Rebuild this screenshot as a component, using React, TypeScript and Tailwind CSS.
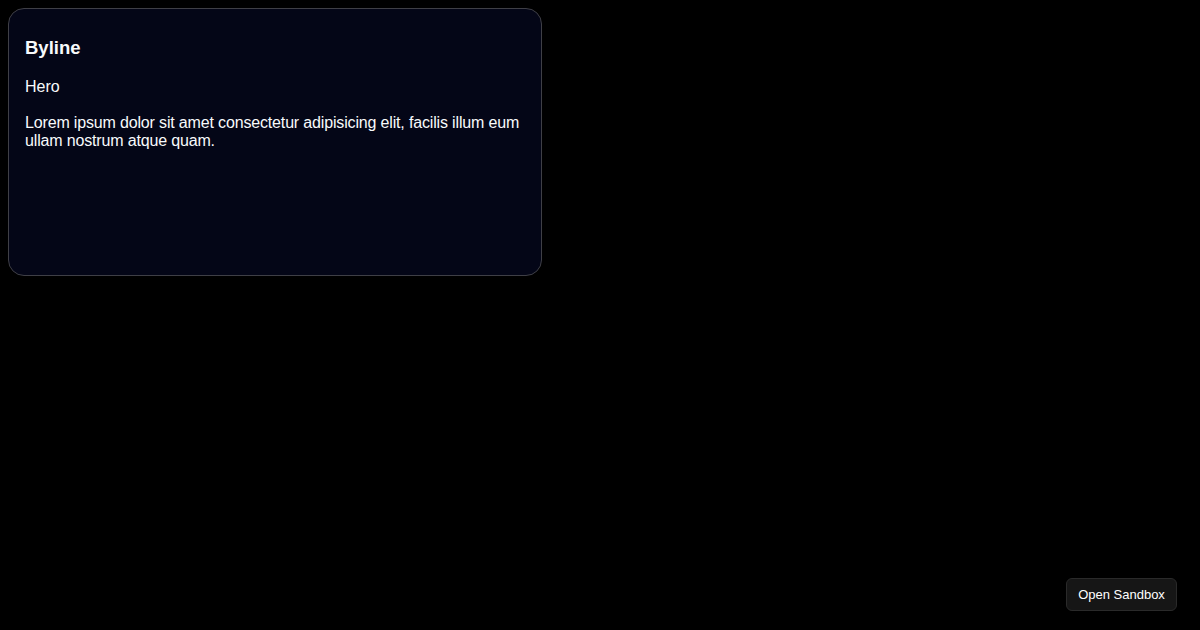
import React from "react";

export default function App() {
  return (
    <div className="min-h-screen w-full bg-black p-2 font-['Liberation_Sans',Arial,sans-serif] text-slate-50">
      <div className="w-[534px] h-[268px] rounded-2xl border border-[#3f3f46] bg-[#040617] px-4 pt-[28px]">
        <h2 className="text-[18.5px] leading-[21px] font-bold">Byline</h2>
        <p className="mt-[20px] text-base leading-[18px]">Hero</p>
        <p className="mt-[18px] text-base leading-[18px] tracking-[-0.16px]">
          Lorem ipsum dolor sit amet consectetur adipisicing elit, facilis illum eum ullam nostrum atque quam.
        </p>
      </div>

      <button className="fixed bottom-[19px] right-[23px] h-[33px] w-[111px] rounded-md border border-[#2a2a2a] bg-[#161616] text-[13px] text-white">
        Open Sandbox
      </button>
    </div>
  );
}
